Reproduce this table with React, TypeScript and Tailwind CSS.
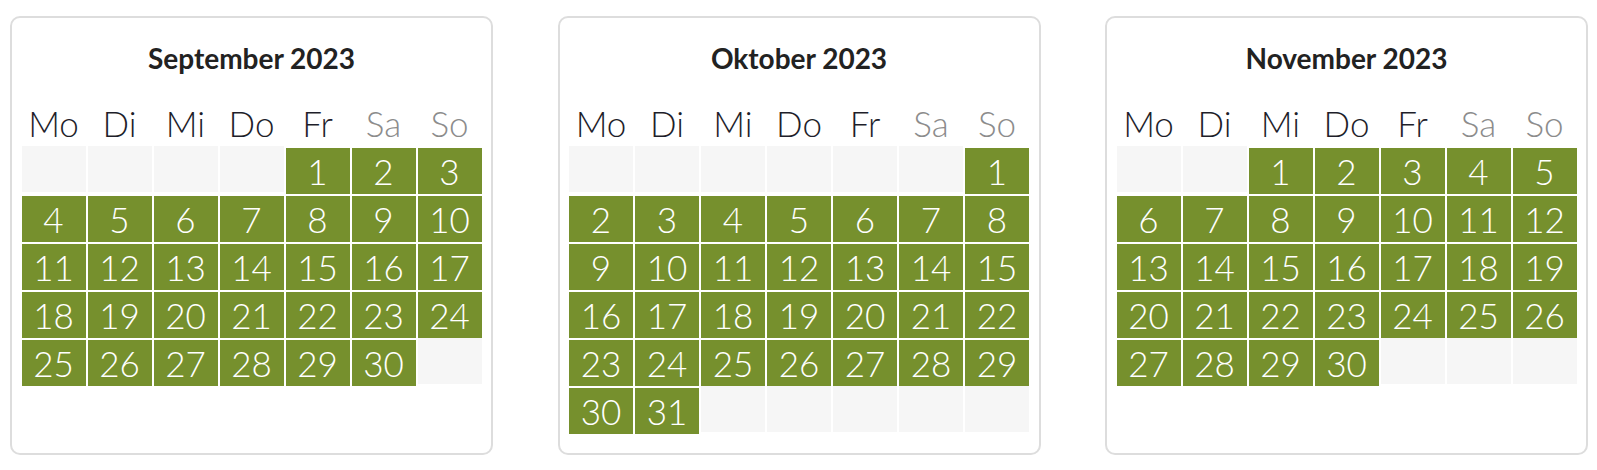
import React from "react";

type Month = {
  title: string;
  offset: number;
  days: number;
};

const months: Month[] = [
  { title: "September 2023", offset: 4, days: 30 },
  { title: "Oktober 2023", offset: 6, days: 31 },
  { title: "November 2023", offset: 2, days: 30 },
];

const weekdays = ["Mo", "Di", "Mi", "Do", "Fr", "Sa", "So"];

const MonthCard = ({ month }: { month: Month }) => {
  const total = Math.ceil((month.offset + month.days) / 7) * 7;
  const cells = Array.from({ length: total }, (_, i) => {
    const day = i - month.offset + 1;
    return day >= 1 && day <= month.days ? day : null;
  });

  return (
    <div className="w-[483px] rounded-[10px] border-2 border-[#dddddd] bg-white pt-[23px] pb-[19px] flex flex-col items-center">
      {/* title */}
      <h2 className="text-[28px] leading-[34px] font-bold text-[#222222]">
        {month.title}
      </h2>

      {/* weekdays */}
      <div className="mt-[27px] grid grid-cols-[repeat(7,64px)] gap-x-[2px]">
        {weekdays.map((wd, index) => (
          <div
            key={wd}
            className={`h-[42px] text-center text-[35px] leading-[42px] font-light ${
              index > 4 ? "text-[#8c8c8c]" : "text-[#1e1e2a]"
            }`}
          >
            {wd}
          </div>
        ))}
      </div>

      {/* days */}
      <div className="mt-[2px] grid grid-cols-[repeat(7,64px)] gap-x-[2px]">
        {cells.map((day, index) =>
          day ? (
            <div
              key={index}
              className="mt-[2px] h-[46px] bg-[#76902d] text-center text-[35px] leading-[46px] font-light text-white"
            >
              {day}
            </div>
          ) : (
            <div key={index} className="mb-[2px] h-[46px] bg-[#f6f6f6]" />
          )
        )}
      </div>
    </div>
  );
};

const App = () => {
  return (
    <div
      className="w-[1597px] bg-white pl-[10px] pt-[16px] flex items-stretch gap-x-[64.5px]"
      style={{ fontFamily: "Lato, 'Open Sans', sans-serif" }}
    >
      {months.map((month) => (
        <MonthCard key={month.title} month={month} />
      ))}
    </div>
  );
};

export default App;
